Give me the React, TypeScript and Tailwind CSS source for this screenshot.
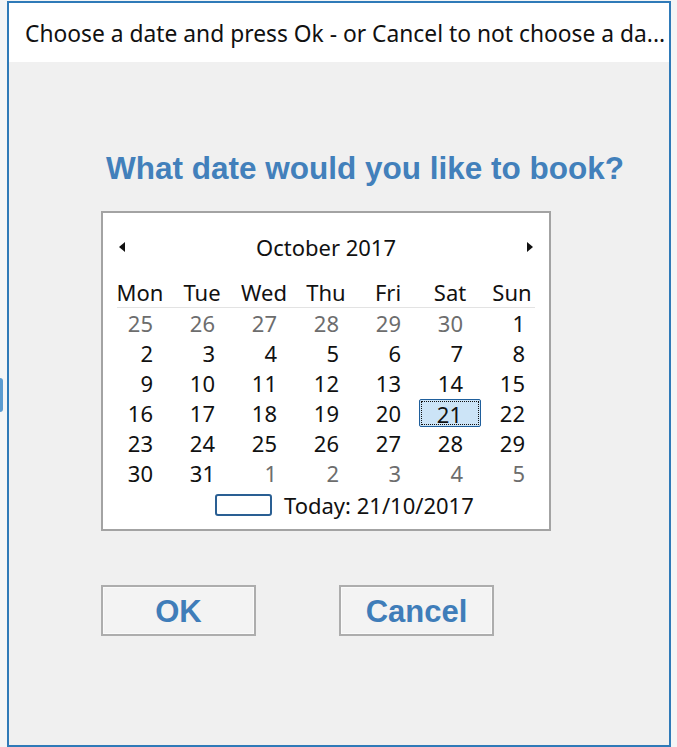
import React from 'react';

const dayNames = ['Mon', 'Tue', 'Wed', 'Thu', 'Fri', 'Sat', 'Sun'];

type Day = { n: number; muted: boolean };

function buildDays(): Day[] {
  const days: Day[] = [];
  for (let n = 25; n <= 30; n++) days.push({ n, muted: true });
  for (let n = 1; n <= 31; n++) days.push({ n, muted: false });
  for (let n = 1; n <= 5; n++) days.push({ n, muted: true });
  return days;
}

function Arrow({ dir }: { dir: 'left' | 'right' }) {
  return (
    <svg width="7" height="10" viewBox="0 0 7 10">
      {dir === 'left' ? <polygon points="6,0 6,10 0,5" fill="#111" /> : <polygon points="1,0 1,10 7,5" fill="#111" />}
    </svg>
  );
}

function Calendar() {
  const days = buildDays();
  return (
    <div className="w-[450px] h-[320px] border-2 border-[#a3a3a3] bg-white px-[6px] pt-[19px] font-['Noto_Sans',sans-serif] text-[22px] text-[#111]">
      <div className="flex h-[30px] items-center justify-between px-[10px]">
        <Arrow dir="left" />
        <span className="leading-none">October 2017</span>
        <Arrow dir="right" />
      </div>
      <div className="mt-[15px] grid h-[30px] grid-cols-7">
        {dayNames.map((d) => (
          <div key={d} className="text-center leading-[30px]">
            {d}
          </div>
        ))}
      </div>
      <div className="mx-[8px] h-px bg-[#e3e3e3]" />
      <div className="grid grid-cols-7">
        {days.map((d, i) => {
          const selected = !d.muted && d.n === 21;
          return (
            <div key={i} className="h-[30px] py-px">
              {selected ? (
                <div className="h-[28px] rounded-[2px] border border-[#1f5f9c] bg-[#cce4f7] p-px">
                  <div className="h-full border border-dotted border-[#111] pr-[16px] text-right leading-[24px]">{d.n}</div>
                </div>
              ) : (
                <div className={`h-[28px] pr-[18px] text-right leading-[28px] ${d.muted ? 'text-[#6d6d6d]' : ''}`}>{d.n}</div>
              )}
            </div>
          );
        })}
      </div>
      <div className="mt-[6px] flex items-center pl-[106px]">
        <div className="h-[22px] w-[57px] rounded-[3px] border-2 border-[#2a5f93]" />
        <span className="ml-[12px] leading-none">Today: 21/10/2017</span>
      </div>
    </div>
  );
}

function DialogButton({ label }: { label: string }) {
  return (
    <button className="h-[51px] w-[155px] border-2 border-[#adadad] bg-[#f3f3f3] p-0">
      <div className="flex h-full w-full items-center justify-center border border-[#fafafa] pt-[4px] font-['Liberation_Sans',Arial,sans-serif] text-[31px] font-bold text-[#3f7db9]">
        {label}
      </div>
    </button>
  );
}

export default function App() {
  return (
    <div className="flex h-[747px] w-[677px] bg-[#f4f5f6]">
      <div className="w-[7px] pt-[378px]">
        <div className="h-[34px] w-[3px] rounded-r-full bg-[#5b9bd0]" />
      </div>
      <div className="mt-px flex h-[746px] w-[664px] flex-col border-2 border-[#2f7ab8] bg-[#f0f0f0]">
        <div className="flex h-[59px] items-center bg-white pl-[16px] pt-[4px]">
          <div className="whitespace-nowrap font-['Noto_Sans',sans-serif] text-[22.8px] text-[#111]">
            Choose a date and press Ok - or Cancel to not choose a da...
          </div>
        </div>
        <div className="flex flex-col pl-[92px] pt-[88px]">
          <h1 className="pl-[5px] font-['Liberation_Sans',Arial,sans-serif] text-[31.5px] font-bold leading-[36px] text-[#4280bb]">
            What date would you like to book?
          </h1>
          <div className="mt-[25px]">
            <Calendar />
          </div>
          <div className="mt-[54px] flex gap-[83px]">
            <DialogButton label="OK" />
            <DialogButton label="Cancel" />
          </div>
        </div>
      </div>
    </div>
  );
}
